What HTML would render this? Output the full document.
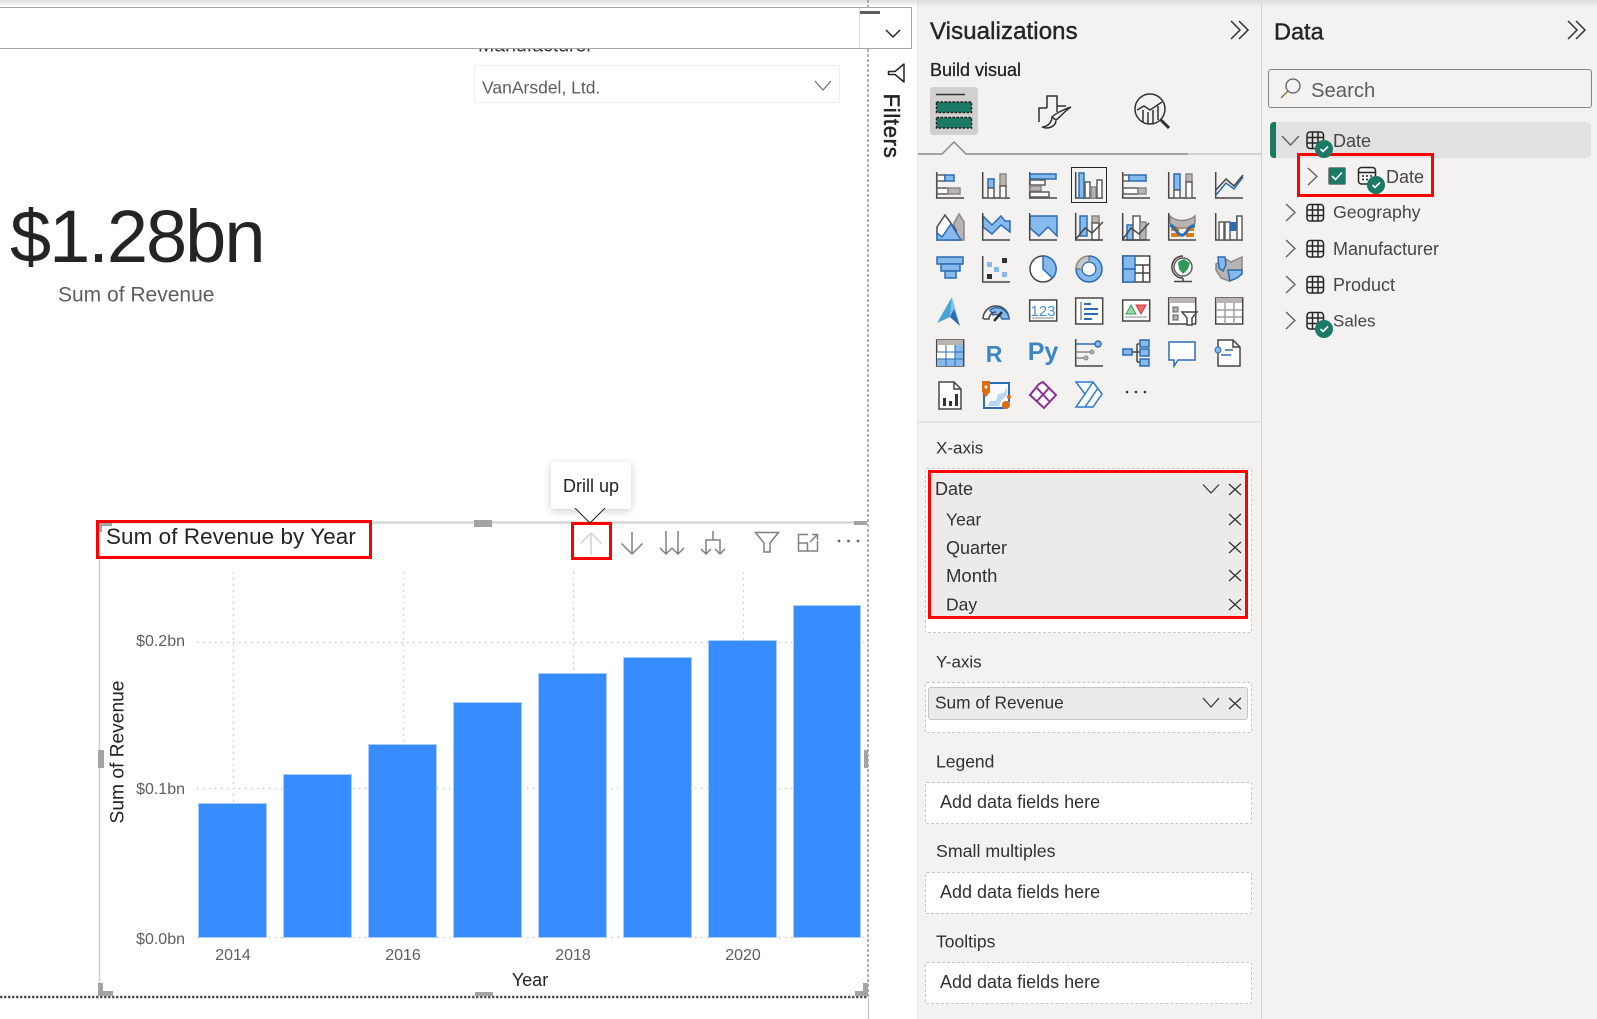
<!DOCTYPE html>
<html lang="en">
<head>
<meta charset="utf-8">
<title>Power BI</title>
<style>
html,body{margin:0;padding:0;background:#fff}
body{width:1597px;height:1019px;position:relative;overflow:hidden;font-family:"Liberation Sans",sans-serif;color:#252423}
.t{position:absolute;white-space:nowrap;line-height:1;transform:translateY(-50%)}
.box{position:absolute;box-sizing:border-box}
.well{left:925px;width:327px;background:#fff;border:1px dashed #c8c6c4;border-radius:2px}
.lab{left:936px;font-size:17.5px;color:#323130}
.f{font-size:18px;color:#323130}
.add{left:940px;font-size:18px;color:#323130}
.tree{left:1333px;font-size:18px;color:#484644}
.ax{font-size:16px;color:#605e5c;transform:translate(-50%,-50%)}
svg{position:absolute;left:0;top:0}
.a{fill:none;stroke:#484644;stroke-width:1.5}
.b{fill:#86b9ec;stroke:#2b6cb4;stroke-width:1.5}
.g{fill:#b7b4b1;stroke:#8a8886;stroke-width:1.5}
.w{fill:#fff;stroke:#605e5c;stroke-width:1.5}
.l{fill:none;stroke:#2b6cb4;stroke-width:1.5}
.ic{fill:none;stroke:#808080;stroke-width:1.5}
.x{fill:none;stroke:#323130;stroke-width:1.2}
.bar{fill:#378cff;stroke:#a9cdff;stroke-width:1}
</style>
</head>
<body>
<!-- panels -->
<div class="box" style="left:917px;top:0;width:344px;height:1019px;background:#f3f2f1;border-left:1px solid #e6e6e6"></div>
<div class="box" style="left:1261px;top:0;width:336px;height:1019px;background:#f3f2f1;border-left:1px solid #d6d4d2"></div>
<div class="box" style="left:0;top:0;width:1597px;height:7px;background:linear-gradient(#dcdcdc,rgba(240,240,240,0))"></div>

<!-- canvas text under header -->
<div class="t" style="left:478px;top:46px;font-size:19.5px;color:#323130">Manufacturer</div>
<div class="box" style="left:474px;top:65px;width:366px;height:38px;border:1px solid #eee;background:#fff"></div>
<div class="t" style="left:482px;top:88px;font-size:17.5px;color:#605e5c">VanArsdel, Ltd.</div>
<div class="t" style="left:10px;top:237px;font-size:74px;color:#252423;letter-spacing:-2px">$1.28bn</div>
<div class="t" style="left:58px;top:295px;font-size:21px;color:#605e5c">Sum of Revenue</div>

<!-- header bar -->
<div class="box" style="left:-2px;top:7px;width:914px;height:42px;background:#fff;border:1px solid #a6a6a6"></div>

<!-- wells -->
<div class="t lab" style="top:448px;font-size:17px">X-axis</div>
<div class="box well" style="top:468px;height:165px"></div>
<div class="box" style="left:928px;top:470px;width:320px;height:149px;background:#edebe9;border:3px solid #f00"></div>
<div class="t f" style="left:935px;top:489px">Date</div>
<div class="t f" style="left:946px;top:520px;font-size:17.5px">Year</div>
<div class="t f" style="left:946px;top:548px">Quarter</div>
<div class="t f" style="left:946px;top:576px;font-size:18.5px">Month</div>
<div class="t f" style="left:946px;top:605px;font-size:17.5px">Day</div>

<div class="t lab" style="top:662px;font-size:17px">Y-axis</div>
<div class="box well" style="top:682px;height:51px"></div>
<div class="box" style="left:928px;top:687px;width:320px;height:33px;background:#edebe9;border:1px solid #c8c6c4;border-radius:3px"></div>
<div class="t f" style="left:935px;top:703px;font-size:17.3px">Sum of Revenue</div>

<div class="t lab" style="top:762px">Legend</div>
<div class="box well" style="top:782px;height:42px"></div>
<div class="t add" style="top:802px">Add data fields here</div>
<div class="t lab" style="top:852px;font-size:17.8px">Small multiples</div>
<div class="box well" style="top:872px;height:42px"></div>
<div class="t add" style="top:892px">Add data fields here</div>
<div class="t lab" style="top:942px">Tooltips</div>
<div class="box well" style="top:962px;height:42px"></div>
<div class="t add" style="top:982px">Add data fields here</div>

<!-- data panel boxes -->
<div class="box" style="left:1268px;top:69px;width:324px;height:39px;border:1px solid #8a8886;border-radius:3px"></div>
<div class="box" style="left:1270px;top:122px;width:321px;height:36px;background:#e1e1e1;border-left:6px solid #1b7a66;border-radius:4px"></div>

<svg width="1597" height="1019" viewBox="0 0 1597 1019" xmlns="http://www.w3.org/2000/svg">
  <!-- canvas borders -->
  <line x1="868" y1="0" x2="868" y2="7" stroke="#666" stroke-dasharray="3 2"/>
  <line x1="868" y1="49" x2="868" y2="997" stroke="#666" stroke-dasharray="3 2"/>
  <line x1="868.5" y1="998" x2="868.5" y2="1019" stroke="#bdbdbd"/>
  <line x1="0" y1="997" x2="867" y2="997" stroke="#555" stroke-width="2.5" stroke-dasharray="2.5 1.5"/>
  <!-- header bar details -->
  <line x1="859.5" y1="8" x2="859.5" y2="48" stroke="#ddd"/>
  <rect x="860" y="11" width="20" height="3" fill="#605e5c"/>
  <path d="M886 30l7 7 7-7" fill="none" stroke="#252423" stroke-width="1.5"/>
  <path d="M815 81l8 9 8-9" fill="none" stroke="#605e5c" stroke-width="1"/>
  <!-- filter funnel -->
  <path d="M904 64V82L895 74.5H888.5V71.5H895Z" fill="none" stroke="#252423" stroke-width="1.5" stroke-linejoin="round"/>

  <!-- chart -->
  <g stroke="#c4c4c4" stroke-width="1.2" stroke-dasharray="1.5 4.5" fill="none">
    <path d="M233.500 572V937M403.500 572V937M573.500 572V937M743.500 572V937"/>
    <path d="M197 642.500H866M197 788.500H866M197 937.500H866"/>
  </g>
  <rect class="bar" x="198.500" y="803.500" width="68" height="134"/>
  <rect class="bar" x="283.500" y="774.500" width="68" height="163"/>
  <rect class="bar" x="368.500" y="744.500" width="68" height="193"/>
  <rect class="bar" x="453.500" y="702.500" width="68" height="235"/>
  <rect class="bar" x="538.500" y="673.500" width="68" height="264"/>
  <rect class="bar" x="623.500" y="657.500" width="68" height="280"/>
  <rect class="bar" x="708.500" y="640.500" width="68" height="297"/>
  <rect class="bar" x="793.500" y="605.500" width="67" height="332"/>
  <!-- visual frame -->
  <line x1="98" y1="522.500" x2="866" y2="522.500" stroke="#cfcfcf" stroke-width="2"/>
  <line x1="99.500" y1="522" x2="99.500" y2="994" stroke="#cfcfcf" stroke-width="1.500"/>
  <rect x="474" y="520" width="18" height="7" fill="#a3a3a3"/>
  <rect x="854" y="521" width="13" height="4" fill="#a3a3a3"/>
  <rect x="98" y="750" width="6" height="18" fill="#a3a3a3"/>
  <rect x="864" y="750" width="4" height="18" fill="#a3a3a3"/>
  <rect x="475" y="992" width="18" height="4" fill="#a3a3a3"/>
  <path d="M98 983H103V991H113V996H98Z" fill="#a3a3a3"/>
  <path d="M868 983H863V991H855V996H868Z" fill="#a3a3a3"/>
  <path d="M98 522H112V526H102V532H98Z" fill="#a3a3a3"/>

  <!-- drill icons -->
  <path d="M591 533V555M580.500 543.500L591 533L601.500 543.500" fill="none" stroke="#d2d2d2" stroke-width="1.500"/>
  <path class="ic" d="M632 532V554M621.500 543.500L632 554L642.500 543.500"/>
  <path class="ic" d="M666 531V554M660 548L666 554L672 548M678 531V554M672 548L678 554L684 548"/>
  <path class="ic" d="M713 531V540M706 554V540H720V554M701 549L706 554L711 549M715 549L720 554L725 549"/>
  <path class="ic" d="M755.500 532.500H778.500L770 543V552H764V543Z"/>
  <path class="ic" d="M808 534.500H798.500V551H817.500V541M798.500 543H807.500V551M810 542L817.500 534.500M812 534.500H817.500V540"/>
  <circle cx="839" cy="541" r="1.400" fill="#666"/><circle cx="848.500" cy="541" r="1.400" fill="#666"/><circle cx="858" cy="541" r="1.400" fill="#666"/>

  <!-- red boxes -->
  <rect x="97.500" y="521.500" width="273" height="36" fill="none" stroke="#f00" stroke-width="3"/>
  <rect x="572.500" y="523.500" width="38" height="35" fill="none" stroke="#f00" stroke-width="3"/>
  <rect x="1298.500" y="154.500" width="134" height="41" fill="none" stroke="#f00" stroke-width="3"/>

  <!-- viz header chevrons -->
  <path d="M1231 21L1240 30L1231 39M1239 21L1248 30L1239 39" fill="none" stroke="#323130" stroke-width="1.500"/>
  <path d="M1568 21L1577 30L1568 39M1576 21L1585 30L1576 39" fill="none" stroke="#323130" stroke-width="1.500"/>

  <!-- tabs -->
  <rect x="930" y="87" width="48" height="48" rx="3" fill="#d2d0ce"/>
  <line x1="936" y1="94.500" x2="965" y2="94.500" stroke="#323130" stroke-width="1.500"/>
  <rect x="936.500" y="102" width="35" height="10.500" fill="#1b7a66" stroke="#201f1e" stroke-width="1.500" stroke-dasharray="2.500 1.500"/>
  <rect x="936.500" y="117.500" width="35" height="10.500" fill="#1b7a66" stroke="#201f1e" stroke-width="1.500" stroke-dasharray="2.500 1.500"/>
  <g fill="none" stroke="#323130" stroke-width="1.500">
    <path d="M1039 122V108H1047M1047 108V96H1057V112M1057 106H1066"/>
    <path d="M1071 107C1066 110 1060 117 1056 120L1052 117C1056 113 1065 109 1071 107Z"/>
    <path d="M1052 118C1051 124 1046 127 1042 127C1046 129 1055 128 1056 121"/>
    <circle cx="1150" cy="109" r="15"/>
    <path d="M1137 110L1144 106L1150 110L1162 102M1143 110V122M1148 112V124M1153 110V124M1158 106V120"/>
    <path d="M1161 120L1169 128" stroke-width="3"/>
  </g>
  <path d="M918 154H942L954 142L966 154H1188" fill="none" stroke="#8a8886" stroke-width="1.500"/>
  <line x1="1188" y1="154" x2="1261" y2="154" stroke="#c8c6c4" stroke-width="1.500"/>
  <line x1="918" y1="422" x2="1261" y2="422" stroke="#e1dfdd" stroke-width="1.500"/>
  <rect x="1071.500" y="167.500" width="35" height="35" fill="none" stroke="#252423"/>

  <!-- grid row 1 -->
  <g transform="translate(936 171)"><path class="a" d="M.7 1V27H28"/><rect class="w" x="1" y="4" width="8" height="6"/><rect class="b" x="9" y="4" width="9" height="6"/><rect class="w" x="1" y="17" width="11" height="6"/><rect class="g" x="12" y="17" width="12" height="6"/></g>
  <g transform="translate(982 171)"><path class="a" d="M.7 1V27H28"/><rect class="b" x="6" y="8" width="6" height="9"/><rect class="w" x="6" y="17" width="6" height="10"/><rect class="g" x="18" y="3" width="6" height="12"/><rect class="w" x="18" y="15" width="6" height="12"/></g>
  <g transform="translate(1029 171)"><path class="a" d="M.7 1V27H28"/><rect class="b" x="1" y="3" width="26" height="5"/><rect class="w" x="1" y="9" width="15" height="5"/><rect class="g" x="1" y="15" width="11" height="5"/><rect class="w" x="1" y="21" width="19" height="5"/></g>
  <g transform="translate(1075 171)"><path class="a" d="M.7 1V27H28"/><rect class="b" x="4" y="2" width="5" height="25"/><rect class="w" x="10" y="11" width="5" height="16"/><rect class="g" x="16" y="16" width="5" height="11"/><rect class="w" x="22" y="9" width="5" height="18"/></g>
  <g transform="translate(1122 171)"><path class="a" d="M.7 1V27H28"/><rect class="w" x="1" y="4" width="6" height="6"/><rect class="b" x="7" y="4" width="17" height="6"/><rect class="w" x="1" y="17" width="15" height="6"/><rect class="g" x="16" y="17" width="8" height="6"/></g>
  <g transform="translate(1168 171)"><path class="a" d="M.7 1V27H28"/><rect class="b" x="6" y="3" width="6" height="16"/><rect class="w" x="6" y="19" width="6" height="8"/><rect class="g" x="18" y="3" width="6" height="8"/><rect class="w" x="18" y="11" width="6" height="16"/></g>
  <g transform="translate(1215 171)"><path class="a" d="M.7 1V27H28"/><path class="l" d="M1 24L11 12L19 18L28 6"/><path class="a" d="M1 19L11 8L19 15L28 4"/></g>

  <!-- grid row 2 -->
  <g transform="translate(936 213)"><path class="g" d="M18 10L23 1L28 9V27H20Z"/><path d="M1 14L9 2L20 17L22 27H1Z" fill="#fff" stroke="#484644" stroke-width="1.500"/><path class="b" d="M1 27V20L6 24L15 11L25 27Z"/></g>
  <g transform="translate(982 213)"><path class="b" d="M1 3L10 12L19 3L23 8H28V19L19 12L10 21L1 14Z"/><path class="a" d="M.7 0V27H28"/></g>
  <g transform="translate(1029 213)"><path class="b" d="M1 3H28V23L19 14L10 23L1 15Z"/><path class="a" d="M.7 0V27H28" /></g>
  <g transform="translate(1075 213)"><rect class="b" x="5" y="3" width="7" height="20"/><rect class="g" x="17" y="3" width="7" height="7"/><rect class="w" x="17" y="10" width="7" height="17"/><path class="a" d="M.7 0V27H28"/><path class="a" d="M1 26L10 15L17 20L28 9"/></g>
  <g transform="translate(1122 213)"><rect class="b" x="5" y="12" width="6" height="15"/><rect class="w" x="11" y="3" width="7" height="24"/><rect class="g" x="18" y="9" width="6" height="18"/><path class="a" d="M.7 0V27H28"/><path class="a" d="M1 26L9 15L17 21L27 10"/></g>
  <g transform="translate(1168 213)"><path class="g" d="M2 3C8 9 20 9 27 3V10C20 17 8 17 2 10Z"/><rect x="3" y="14" width="8" height="4" fill="#e07b1a"/><rect x="18" y="14" width="8" height="4" fill="#e07b1a"/><rect x="3" y="20" width="8" height="4" fill="#e07b1a"/><rect x="18" y="20" width="8" height="4" fill="#e07b1a"/><path d="M2 12C8 14 10 24 15 22C20 20 20 12 27 13" fill="none" stroke="#2b6cb4" stroke-width="3"/><path class="a" d="M.7 0V27H28"/></g>
  <g transform="translate(1215 213)"><path class="a" d="M.7 0V27H28"/><rect class="w" x="4" y="9" width="5" height="18"/><rect class="w" x="10" y="9" width="5" height="18"/><rect x="15" y="9" width="6" height="9" fill="#2b6cb4"/><rect x="21" y="3" width="2" height="14" fill="#2b6cb4"/><rect class="w" x="22" y="3" width="5" height="24"/></g>

  <!-- grid row 3 -->
  <g transform="translate(936 256)"><rect class="b" x="1" y="1" width="26" height="7"/><rect class="b" x="5" y="8" width="19" height="7"/><rect class="b" x="9" y="15" width="11" height="7"/></g>
  <g transform="translate(982 255)"><path class="a" d="M.7 1V27H28"/><rect x="5" y="7" width="5" height="5" fill="#86b9ec"/><rect x="20" y="3" width="5" height="5" fill="#323130"/><rect x="12" y="12" width="5" height="5" fill="#86b9ec"/><rect x="5" y="19" width="5" height="5" fill="#323130"/><rect x="20" y="17" width="5" height="5" fill="#86b9ec"/></g>
  <g transform="translate(1029 255)"><circle cx="14" cy="14" r="13" fill="#fff" stroke="#484644" stroke-width="1.500"/><path class="b" d="M14 1A13 13 0 0 1 23.500 23L14 14Z"/></g>
  <g transform="translate(1075 255)"><circle cx="14" cy="14" r="7" fill="#fbfafa" stroke="#2b6cb4" stroke-width="1.500"/><path d="M14 3.500A10.500 10.500 0 0 0 3.500 14" fill="none" stroke="#c8c6c4" stroke-width="6"/><path d="M14 3.500A10.500 10.500 0 1 1 3.500 14" fill="none" stroke="#86b9ec" stroke-width="6"/><path class="l" d="M14 1A13 13 0 1 1 1 14"/><path d="M14 1A13 13 0 0 0 1 14" fill="none" stroke="#8a8886" stroke-width="1.500"/><path d="M1 14H6M14 1V6" stroke="#605e5c" stroke-width="1"/></g>
  <g transform="translate(1122 255)"><rect x=".7" y="1" width="27" height="26" fill="#fff" stroke="#484644" stroke-width="1.500"/><rect class="b" x="1" y="1" width="12" height="13"/><rect class="b" x="1" y="14" width="12" height="13"/><path class="a" d="M13 10H28M21 10V27M13 18H28"/></g>
  <g transform="translate(1168 255)"><circle cx="15" cy="12" r="9" fill="#fff" stroke="#605e5c" stroke-width="1.500"/><path d="M10 7L16 4L22 8L20 14L15 19L11 14Z" fill="#2f9a5a"/><path d="M15 1C7 1 3 8 4 14C5 19 9 23 15 23" fill="none" stroke="#484644" stroke-width="1.500"/><path d="M15 23V26M6 26.500H24" fill="none" stroke="#484644" stroke-width="1.500"/></g>
  <g transform="translate(1215 256)"><path class="g" d="M1 8L9 2L16 6L27 1V15L21 22L14 25L6 22L1 14Z"/><path class="b" d="M3 1H10L11 9L8 15L4 12Z"/><path class="b" d="M13 14H27V18L22 22L15 25L14 20Z"/></g>

  <!-- grid row 4 -->
  <g transform="translate(936 296)"><path d="M16 1L1 27L14 21Z" fill="#4aa3d6"/><path d="M16 1L24 30L14 21Z" fill="#7cc4e8"/><path d="M14 21L24 30L18 13Z" fill="#2b6cb4"/></g>
  <g transform="translate(982 297)"><path d="M1 22A13 13 0 0 1 27 22" fill="none" stroke="#484644" stroke-width="1.500"/><path d="M8 13A12 12 0 0 1 27 22H20A7 7 0 0 0 11 18Z" class="b"/><path d="M1.500 22H7A7 7 0 0 1 14 15" fill="none" stroke="#484644" stroke-width="1.500"/><path d="M12 24L20 15" stroke="#323130" stroke-width="2.500"/></g>
  <g transform="translate(1029 297)"><rect x=".7" y="3" width="27" height="21" fill="#fff" stroke="#484644" stroke-width="1.500"/><line x1="3" y1="21" x2="25" y2="21" stroke="#8a8886"/></g>
  <g transform="translate(1075 297)"><rect x=".7" y="1" width="27" height="26" fill="#fff" stroke="#484644" stroke-width="1.500"/><line x1="6" y1="5" x2="6" y2="23" stroke="#8a8886" stroke-width="1.500"/><path d="M9 7H16M9 12H23M9 17H23M9 22H17" fill="none" stroke="#2b6cb4" stroke-width="2"/></g>
  <g transform="translate(1122 297)"><rect x=".7" y="3" width="27" height="21" fill="#fff" stroke="#484644" stroke-width="1.500"/><path d="M4 17L9 8L14 17Z" fill="#9ed8a6" stroke="#3a9a5a"/><path d="M14 8H24L19 17Z" fill="#f06a6a" stroke="#d13438"/><line x1="3" y1="20" x2="25" y2="20" stroke="#8a8886"/></g>
  <g transform="translate(1168 297)"><rect x=".7" y="1" width="27" height="26" fill="#fff" stroke="#484644" stroke-width="1.500"/><rect x="1" y="1" width="26" height="5" fill="#b7b4b1"/><rect x="5" y="10" width="5" height="5" fill="#b7b4b1" stroke="#605e5c"/><rect x="5" y="18" width="5" height="5" fill="#b7b4b1" stroke="#605e5c"/><path d="M14 15H29L24 21V28H19V21Z" fill="#fff" stroke="#484644" stroke-width="1.500"/></g>
  <g transform="translate(1215 297)"><rect x=".7" y="1" width="27" height="26" fill="#fff" stroke="#484644" stroke-width="1.500"/><rect x="1" y="1" width="26" height="5" fill="#b7b4b1"/><path d="M1 13H27M1 20H27M10 6V27M19 6V27" stroke="#a19f9d" stroke-width="1.500" fill="none"/></g>

  <!-- grid row 5 -->
  <g transform="translate(936 339)"><rect x=".7" y="1" width="27" height="26" fill="#fff" stroke="#484644" stroke-width="1.500"/><rect x="1" y="1" width="26" height="5" fill="#b7b4b1"/><rect x="19" y="6" width="8" height="21" fill="#86b9ec"/><rect x="1" y="20" width="26" height="7" fill="#86b9ec"/><rect x="1" y="13" width="18" height="7" fill="#fff"/><path d="M1 13H27M1 20H27M10 6V27M19 6V27" stroke="#2b6cb4" fill="none"/></g>
  <g transform="translate(1122 339)"><rect class="b" x="1" y="10" width="9" height="6"/><path class="a" d="M10 13H15M15 5V23M15 5H18M15 13H18M15 23H18"/><rect class="b" x="18" y="1" width="9" height="7"/><rect class="b" x="18" y="10" width="9" height="7"/><rect class="b" x="18" y="20" width="9" height="7"/></g>
  <g transform="translate(1075 339)"><path class="a" d="M.7 0V27H28"/><path d="M1 5H21" stroke="#2b6cb4" stroke-width="1.500"/><path d="M1 13H15M1 19H9" stroke="#8a8886" stroke-width="1.500"/><circle cx="23" cy="5" r="3" fill="#86b9ec" stroke="#2b6cb4" stroke-width="1.500"/><circle cx="17" cy="13" r="2" fill="#b7b4b1" stroke="#8a8886"/><circle cx="11" cy="19" r="2" fill="#b7b4b1" stroke="#8a8886"/></g>
  <g transform="translate(1168 339)"><path d="M1 3H27V21H10L6 27V21H1Z" fill="#fff" stroke="#2b6cb4" stroke-width="1.500"/></g>
  <g transform="translate(1215 339)"><path d="M3 1H18L25 8V27H3Z" fill="#fff" stroke="#484644" stroke-width="1.500"/><path class="a" d="M18 1V8H25"/><circle cx="3" cy="11" r="3" fill="#86b9ec" stroke="#2b6cb4"/><path d="M10 11H18M6 16H16" stroke="#2b6cb4" stroke-width="1.500"/></g>

  <!-- grid row 6 -->
  <g transform="translate(938 381)"><path d="M1 1H16L23 8V28H1Z" fill="#fff" stroke="#484644" stroke-width="1.500"/><path class="a" d="M16 1V8H23"/><rect x="5" y="17" width="3" height="8" fill="#323130"/><rect x="11" y="20" width="3" height="5" fill="#323130"/><rect x="17" y="13" width="3" height="12" fill="#323130"/></g>
  <g transform="translate(982 381)"><path d="M2 8V27H22C24 24 28 22 27 18L27 2H8" fill="#fbfafa" stroke="#2b6cb4" stroke-width="2"/><path d="M6 25L8 20H14L16 13L22 12L25 6V14L19 20L17 25Z" fill="#b9d5f2"/><path d="M0 0H8V11L4 16L0 11Z" fill="#dd6b10"/><circle cx="4" cy="6" r="1.500" fill="#fff"/><circle cx="24" cy="24" r="4" fill="#dd6b10"/><circle cx="27" cy="16" r="2" fill="#dd6b10"/></g>
  <g transform="translate(1029 381)" fill="#fbfafa" stroke="#8b2f96" stroke-width="2"><path d="M1 14L10 3L14 1L27 14L15 27Z"/><path d="M8 7L20 20M20 7L8 20" fill="none"/></g>
  <g transform="translate(1075 381)" fill="#fff" stroke="#2b78d4" stroke-width="1.500"><path d="M1 1H18L27 13L18 26H1L10 13Z"/><path d="M10 13L18 1M10 26L23 7" fill="none"/></g>
  <circle cx="1127" cy="392" r="1.300" fill="#323130"/><circle cx="1136" cy="392" r="1.300" fill="#323130"/><circle cx="1145" cy="392" r="1.300" fill="#323130"/>

  <!-- well icons -->
  <g class="x">
    <path d="M1203 484.500L1211 493L1219 484.500"/>
    <path d="M1229 484L1241 495M1241 484L1229 495"/>
    <path d="M1229 514L1241 525M1241 514L1229 525"/>
    <path d="M1229 542L1241 553M1241 542L1229 553"/>
    <path d="M1229 570L1241 581M1241 570L1229 581"/>
    <path d="M1229 599L1241 610M1241 599L1229 610"/>
    <path d="M1203 698L1211 707L1219 698"/>
    <path d="M1229 698L1241 709M1241 698L1229 709"/>
  </g>

  <!-- data tree -->
  <g fill="none" stroke="#605e5c" stroke-width="1.300">
    <circle cx="1293" cy="86" r="7" stroke="#605e5c"/>
    <path d="M1288 91L1281 98" stroke="#8a6d3b"/>
    <path d="M1282 136L1290.500 145L1299 136"/>
    <path d="M1308 168L1317 176.500L1308 185"/>
    <path d="M1286 204L1295 212.500L1286 221"/>
    <path d="M1286 240L1295 248.500L1286 257"/>
    <path d="M1286 276L1295 284.500L1286 293"/>
    <path d="M1286 312L1295 320.500L1286 329"/>
  </g>
  <g fill="none" stroke="#252423" stroke-width="1.500">
    <rect x="1307" y="132" width="16.500" height="16.500" rx="3"/><path d="M1312.500 132V148.500M1318 132V148.500M1307 137.500H1323.500M1307 143H1323.500"/>
    <rect x="1307" y="204.500" width="16.500" height="16.500" rx="3"/><path d="M1312.500 204.500V221M1318 204.500V221M1307 210H1323.500M1307 215.500H1323.500"/>
    <rect x="1307" y="240.500" width="16.500" height="16.500" rx="3"/><path d="M1312.500 240.500V257M1318 240.500V257M1307 246H1323.500M1307 251.500H1323.500"/>
    <rect x="1307" y="276.500" width="16.500" height="16.500" rx="3"/><path d="M1312.500 276.500V293M1318 276.500V293M1307 282H1323.500M1307 287.500H1323.500"/>
    <rect x="1307" y="312.500" width="16.500" height="16.500" rx="3"/><path d="M1312.500 312.500V329M1318 312.500V329M1307 318H1323.500M1307 323.500H1323.500"/>
    <rect x="1358.500" y="167.500" width="17" height="16.500" rx="3"/><path d="M1358.500 172.500H1375.500"/>
    <path d="M1362 176H1364M1366 176H1368M1370 176H1372M1362 179.500H1364M1366 179.500H1368"/>
  </g>
  <rect x="1328.500" y="167.500" width="17" height="17" rx="1.500" fill="#1b7a66" stroke="#8a8886"/>
  <path d="M1332 176L1335.500 179.500L1342 172.500" fill="none" stroke="#fff" stroke-width="1.600"/>
  <g><circle cx="1324" cy="149" r="9" fill="#1b7a66"/><path d="M1320.500 149L1323 151.500L1328 146.500" fill="none" stroke="#fff" stroke-width="1.600"/></g>
  <g><circle cx="1376" cy="185" r="9" fill="#1b7a66"/><path d="M1372.500 185L1375 187.500L1380 182.500" fill="none" stroke="#fff" stroke-width="1.600"/></g>
  <g><circle cx="1324" cy="329" r="9" fill="#1b7a66"/><path d="M1320.500 329L1323 331.500L1328 326.500" fill="none" stroke="#fff" stroke-width="1.600"/></g>

  <!-- real-text glyph icons -->
  <text x="1043" y="316" text-anchor="middle" font-family="Liberation Sans" font-size="15" fill="#4a90d9">123</text>
  <text x="994" y="362" text-anchor="middle" font-family="Liberation Sans" font-size="23" font-weight="700" fill="#3a87c4">R</text>
  <text x="1043" y="360" text-anchor="middle" font-family="Liberation Sans" font-size="25" font-weight="700" fill="#3a87c4">Py</text>
</svg>

<!-- tooltip -->
<div class="box" style="left:551px;top:462px;width:80px;height:47px;background:#fff;border-radius:3px;box-shadow:0 2px 9px rgba(0,0,0,.2)"></div>
<svg width="1597" height="1019" viewBox="0 0 1597 1019"><path d="M575 508L590 523L605 508" fill="#fff" stroke="#252423" stroke-width="1"/><rect x="574" y="504" width="32" height="4" fill="#fff"/></svg>
<div class="t" style="left:563px;top:486px;font-size:18px;color:#252423">Drill up</div>

<!-- chart text -->
<div class="t" style="left:106px;top:537px;font-size:22.4px;color:#252423;letter-spacing:.1px">Sum of Revenue by Year</div>
<div class="t" style="right:1412px;top:642px;font-size:16px;color:#605e5c">$0.2bn</div>
<div class="t" style="right:1412px;top:790px;font-size:16px;color:#605e5c">$0.1bn</div>
<div class="t" style="right:1412px;top:940px;font-size:16px;color:#605e5c">$0.0bn</div>
<div class="t ax" style="left:233px;top:956px">2014</div>
<div class="t ax" style="left:403px;top:956px">2016</div>
<div class="t ax" style="left:573px;top:956px">2018</div>
<div class="t ax" style="left:743px;top:956px">2020</div>
<div class="t" style="left:530px;top:980px;font-size:18px;color:#252423;transform:translate(-50%,-50%)">Year</div>
<div class="t" style="left:118px;top:752px;font-size:19.2px;color:#252423;transform:translate(-50%,-50%) rotate(-90deg)">Sum of Revenue</div>

<!-- filters -->
<div class="t" style="left:891px;top:126px;font-size:22px;color:#252423;letter-spacing:.7px;-webkit-text-stroke:.5px #252423;transform:translate(-50%,-50%) rotate(90deg)">Filters</div>

<!-- panel headings -->
<div class="t" style="left:930px;top:32px;font-size:24px;color:#252423;-webkit-text-stroke:.4px #252423;letter-spacing:.1px">Visualizations</div>
<div class="t" style="left:930px;top:70px;font-size:18px;color:#252423;-webkit-text-stroke:.3px #252423">Build visual</div>
<div class="t" style="left:1274px;top:32px;font-size:23.5px;color:#252423;-webkit-text-stroke:.4px #252423">Data</div>
<div class="t" style="left:1311px;top:91px;font-size:20.3px;color:#605e5c">Search</div>
<div class="t tree" style="top:141px">Date</div>
<div class="t tree" style="left:1386px;top:177px">Date</div>
<div class="t tree" style="top:213px;font-size:17.7px">Geography</div>
<div class="t tree" style="top:249px">Manufacturer</div>
<div class="t tree" style="top:285px">Product</div>
<div class="t tree" style="top:321px;font-size:17px">Sales</div>
</body>
</html>
